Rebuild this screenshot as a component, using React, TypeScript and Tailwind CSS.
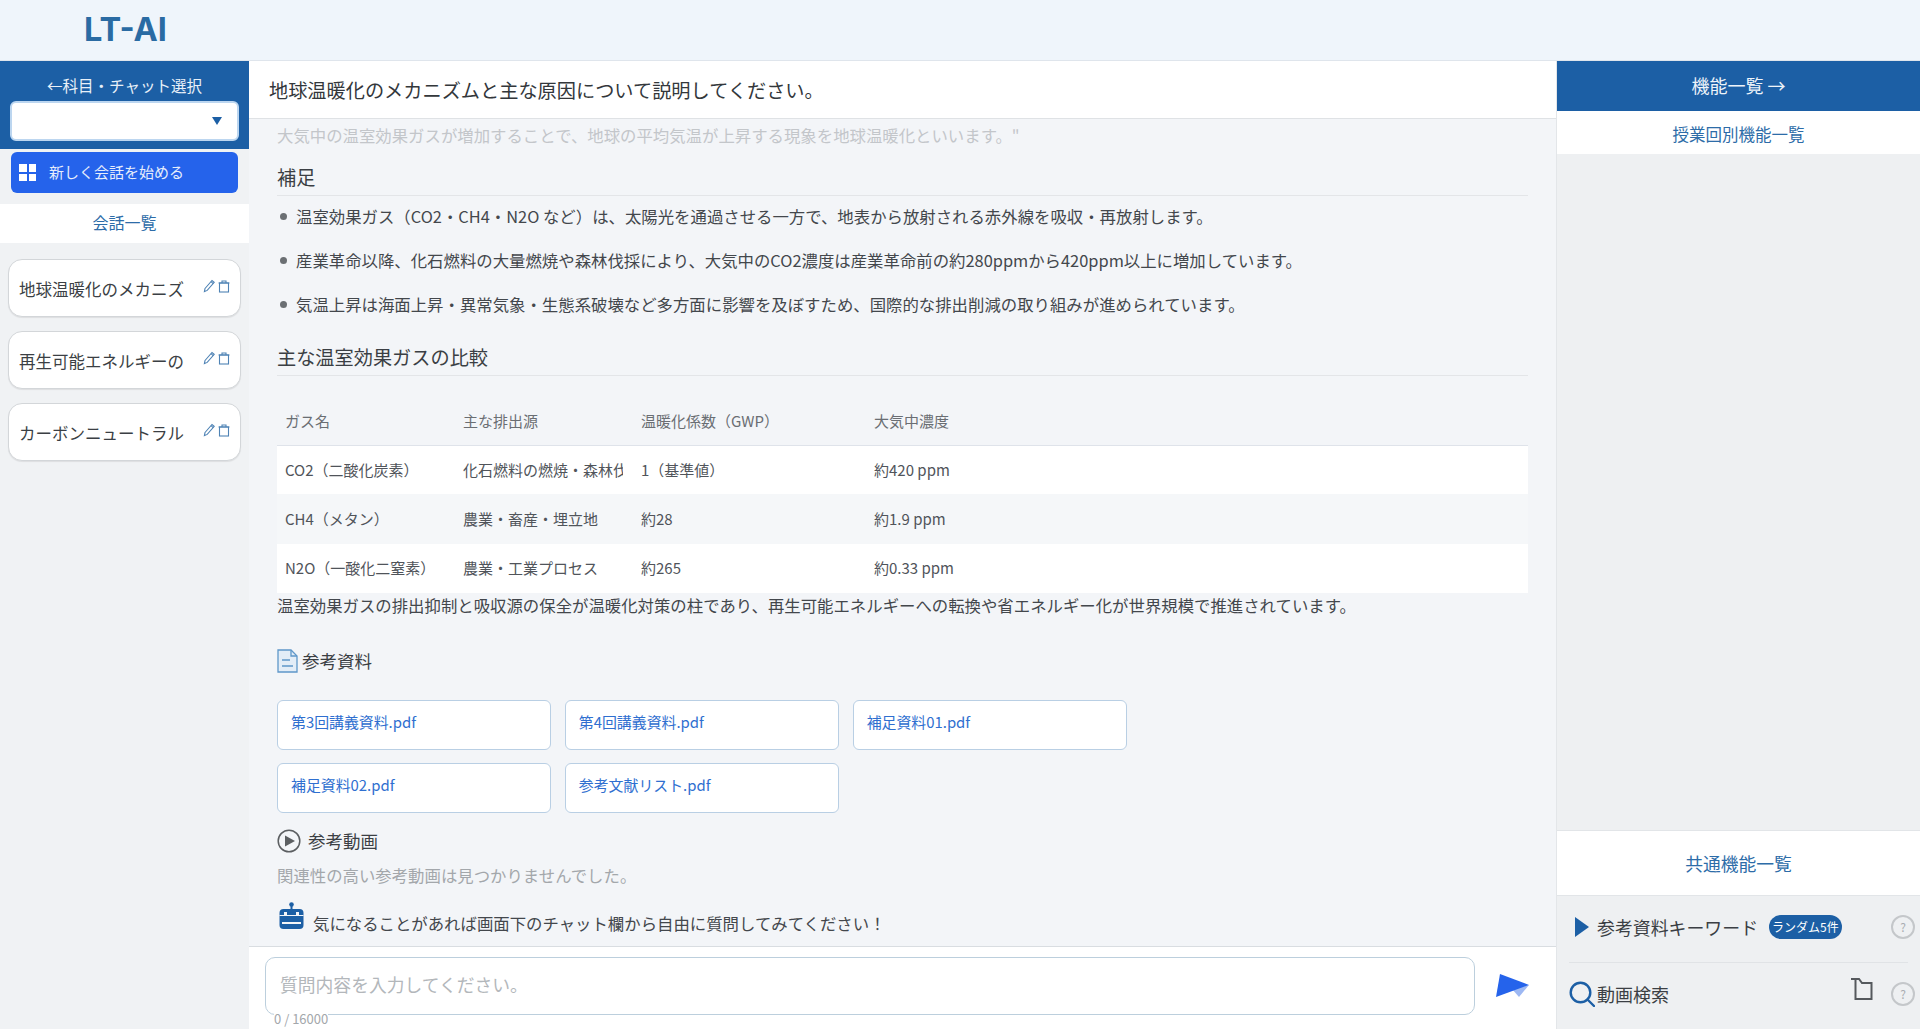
import React from "react";

const chats = ["地球温暖化のメカニズ", "再生可能エネルギーの", "カーボンニュートラル"];

const bullets = [
  "温室効果ガス（CO2・CH4・N2O など）は、太陽光を通過させる一方で、地表から放射される赤外線を吸収・再放射します。",
  "産業革命以降、化石燃料の大量燃焼や森林伐採により、大気中のCO2濃度は産業革命前の約280ppmから420ppm以上に増加しています。",
  "気温上昇は海面上昇・異常気象・生態系破壊など多方面に影響を及ぼすため、国際的な排出削減の取り組みが進められています。",
];

const rows = [
  ["CO2（二酸化炭素）", "化石燃料の燃焼・森林伐採", "1（基準値）", "約420 ppm"],
  ["CH4（メタン）", "農業・畜産・埋立地", "約28", "約1.9 ppm"],
  ["N2O（一酸化二窒素）", "農業・工業プロセス", "約265", "約0.33 ppm"],
];

const pdfs = ["第3回講義資料.pdf", "第4回講義資料.pdf", "補足資料01.pdf", "補足資料02.pdf", "参考文献リスト.pdf"];

const HelpIcon = () => (
  <div className="flex h-[24px] w-[24px] shrink-0 items-center justify-center rounded-full border-2 border-[#c4c7ca] text-[12px] text-[#a9adb1]">
    ?
  </div>
);

const PencilTrash = () => (
  <div className="flex shrink-0 items-center gap-[2px] text-[#4f83b5]">
    <svg width="13" height="14" viewBox="0 0 13 14" fill="none" stroke="currentColor" strokeWidth="1.1">
      <path d="M2 9.5 9 1.5l2.2 1.9-7 8L1.4 12.6z" />
      <path d="M8 2.7l2.2 1.9" />
    </svg>
    <svg width="12" height="13" viewBox="0 0 12 13" fill="none" stroke="currentColor" strokeWidth="1.1">
      <rect x="1.5" y="3" width="9" height="9" />
      <path d="M0.5 3h11M4 3V1h4v2" />
    </svg>
  </div>
);

const Sidebar = () => (
  <aside className="flex w-[249px] shrink-0 flex-col bg-[#f0f2f4]">
    <div className="h-[88px] bg-[#1c5fa5] px-[10px] pt-[13px]">
      <div className="text-center text-[15.5px] leading-[22px] text-[#e8f0f8]">←科目・チャット選択</div>
      <div className="mt-[5px] flex h-[40px] items-center justify-end rounded-[6px] border-2 border-[#bcd6f0] bg-white pr-[15px]">
        <div className="h-0 w-0 border-x-[5px] border-t-[8px] border-x-transparent border-t-[#1c5fa5]" />
      </div>
    </div>
    <div className="mx-[11px] mt-[3px] flex h-[41px] items-center rounded-[6px] bg-[#2563eb] pl-[8px] text-[15px] text-[#e6edfb]">
      <div className="grid grid-cols-2 gap-[2px]">
        <div className="h-[7.5px] w-[7.5px] bg-white" />
        <div className="h-[7.5px] w-[7.5px] bg-white" />
        <div className="h-[7.5px] w-[7.5px] bg-white" />
        <div className="h-[7.5px] w-[7.5px] bg-white" />
      </div>
      <span className="ml-[13px]">新しく会話を始める</span>
    </div>
    <div className="mt-[11px] flex h-[39px] items-center justify-center bg-white pb-[3px] text-[16px] text-[#2d6ca8]">会話一覧</div>
    <div className="mt-[16px] flex flex-col gap-[14px] px-[8px]">
      {chats.map((c) => (
        <div
          key={c}
          className="flex h-[58px] items-center justify-between rounded-[14px] border border-[#d3d6d9] bg-white pl-[10px] pr-[10px] shadow-[0_1px_1px_rgba(0,0,0,0.08)]"
        >
          <span className="mt-[3px] whitespace-nowrap text-[16.5px] text-[#3b3f44]">{c}</span>
          <div className="-mt-[4px]">
            <PencilTrash />
          </div>
        </div>
      ))}
    </div>
  </aside>
);

const SectionTitle = ({ children }: { children: React.ReactNode }) => (
  <div className="border-b border-[#e3e5e8] pb-[5px] pt-[1px] text-[19.2px] leading-[25px] text-[#3b3f44]">{children}</div>
);

const Main = () => (
  <main className="flex min-w-0 flex-1 flex-col bg-[#f3f5f8]">
    <div className="flex h-[58px] shrink-0 items-center border-b border-[#dfe2e5] bg-white pl-[20px] pt-[2px] text-[19.2px] text-[#33373b]">
      地球温暖化のメカニズムと主な原因について説明してください。
    </div>
    <div className="min-h-0 flex-1 overflow-hidden pl-[28px] pr-[28px] pt-[4px]">
      <p className="text-[16.4px] leading-[24px] text-[#c3c6ca]">大気中の温室効果ガスが増加することで、地球の平均気温が上昇する現象を地球温暖化といいます。"</p>
      <div className="mt-[17px]">
        <SectionTitle>補足</SectionTitle>
      </div>
      <ul className="mt-[8px] flex flex-col gap-[20px]">
        {bullets.map((b) => (
          <li key={b} className="flex items-center text-[16.4px] leading-[24px] text-[#43474c]">
            <span className="ml-[3px] mr-[9px] h-[7px] w-[7px] rounded-full bg-[#6b6f73]" />
            {b}
          </li>
        ))}
      </ul>
      <div className="mt-[28px]">
        <SectionTitle>主な温室効果ガスの比較</SectionTitle>
      </div>
      <table className="mt-[21px] w-full table-fixed text-[15px] text-[#50545a]">
        <thead>
          <tr className="h-[48px] border-b border-[#dfe3ea] text-left text-[#6a6e73]">
            <th className="w-[178px] pl-[8px] font-normal">ガス名</th>
            <th className="w-[178px] pl-[8px] font-normal">主な排出源</th>
            <th className="w-[233px] pl-[8px] font-normal">温暖化係数（GWP）</th>
            <th className="pl-[8px] font-normal">大気中濃度</th>
          </tr>
        </thead>
        <tbody>
          {rows.map((r, i) => (
            <tr key={r[0]} className={i === 1 ? "h-[50px] bg-[#f5f7f9]" : "h-[49px] bg-white"}>
              {r.map((c) => (
                <td key={c} className="whitespace-nowrap pl-[8px] pr-[10px]">
                  <div className="overflow-hidden">{c}</div>
                </td>
              ))}
            </tr>
          ))}
        </tbody>
      </table>
      <p className="text-[16.4px] leading-[24px] text-[#43474c]">
        温室効果ガスの排出抑制と吸収源の保全が温暖化対策の柱であり、再生可能エネルギーへの転換や省エネルギー化が世界規模で推進されています。
      </p>
      <div className="mt-[31px] flex items-center gap-[4px]">
        <svg width="21" height="24" viewBox="0 0 21 24" fill="#e3edf7" stroke="#5f97c9" strokeWidth="1.3">
          <path d="M1 1h13l6 6v16H1z" />
          <path d="M14 1v6h6" fill="none" />
          <path d="M5 11h8M5 17h11" fill="none" />
        </svg>
        <span className="text-[17.5px] text-[#3b3f44]">参考資料</span>
      </div>
      <div className="mt-[26px] grid w-[850px] grid-cols-3 gap-x-[13.5px] gap-y-[13px]">
        {pdfs.map((p) => (
          <div
            key={p}
            className="h-[50px] rounded-[6px] border border-[#b9cfe4] bg-white pl-[13px] pt-[9px] text-[14.9px] leading-[24px] text-[#2f6fd0]"
          >
            {p}
          </div>
        ))}
      </div>
      <div className="mt-[15px] flex items-center gap-[7px]">
        <svg width="24" height="24" viewBox="0 0 24 24" fill="none">
          <circle cx="12" cy="12" r="10.8" stroke="#5c5f62" strokeWidth="1.5" />
          <path d="M8 6.5 18 12 8 17.5z" fill="#5c5f62" />
        </svg>
        <span className="text-[17.5px] text-[#3b3f44]">参考動画</span>
      </div>
      <p className="mt-[8px] text-[16.4px] leading-[24px] text-[#a3a7ab]">関連性の高い参考動画は見つかりませんでした。</p>
      <div className="mt-[15px] flex items-end gap-[9px] pl-[2px]">
        <svg width="25" height="28" viewBox="0 0 25 28" fill="#1c5fa5">
          <circle cx="12.5" cy="2.5" r="2.3" />
          <rect x="11.5" y="3" width="2" height="5" />
          <rect x="0.5" y="7" width="24" height="20" rx="4" />
          <rect x="0.5" y="13" width="24" height="1" fill="#f3f5f8" />
          <rect x="5" y="10" width="3" height="3" fill="#f3f5f8" />
          <rect x="17" y="10" width="3" height="3" fill="#f3f5f8" />
          <rect x="3" y="20" width="19" height="2" fill="#f3f5f8" />
        </svg>
        <span className="-mb-[4px] text-[16.4px] leading-[22px] text-[#43474c]">気になることがあれば画面下のチャット欄から自由に質問してみてください！</span>
      </div>
    </div>
    <div className="relative h-[83px] shrink-0 border-t border-[#d9dde1] bg-white pl-[16px] pr-[26px] pt-[10px]">
      <div className="flex items-start gap-[21px]">
        <div className="flex h-[58px] flex-1 items-center rounded-[10px] border border-[#bccfdd] bg-white pb-[4px] pl-[14px] text-[17.8px] text-[#b3b7bb]">
          質問内容を入力してください。
        </div>
        <svg className="mt-[17px] shrink-0" width="34" height="24" viewBox="0 0 34 24">
          <path d="M16 15 33 11 23 23z" fill="#9db8f3" />
          <path d="M4 0 33 11 0 23z" fill="#2563eb" />
        </svg>
      </div>
      <span className="absolute left-[25px] top-[63px] bg-white text-[13px] leading-[18px] text-[#a3a7ab]">0 / 16000</span>
    </div>
  </main>
);

const RightPanel = () => (
  <aside className="flex w-[364px] shrink-0 flex-col border-l border-[#e3e6e9] bg-[#eef0f2]">
    <div className="flex h-[50px] shrink-0 items-center justify-center bg-[#1c5fa5] pb-[2px] text-[18px] text-[#eef4fa]">機能一覧 →</div>
    <div className="flex h-[43px] shrink-0 items-center justify-center bg-white pt-[4px] text-[16.5px] text-[#2d6ca8]">授業回別機能一覧</div>
    <div className="flex-1" />
    <div className="flex h-[66px] shrink-0 items-center justify-center border-y border-[#e2e5e8] bg-white text-[17.8px] text-[#2d6ca8]">共通機能一覧</div>
    <div className="flex h-[66px] shrink-0 items-center pb-[4px] pl-[18px] pr-[5px]">
      <div className="h-0 w-0 border-y-[10px] border-l-[14px] border-y-transparent border-l-[#1c5fa5]" />
      <span className="ml-[8px] text-[17.9px] text-[#3b3f44]">参考資料キーワード</span>
      <span className="ml-[11px] flex h-[24px] items-center rounded-full bg-[#1c5fa5] px-[3px] text-[12px] text-white">ランダム5件</span>
      <div className="ml-auto">
        <HelpIcon />
      </div>
    </div>
    <div className="mx-[12px] border-t border-[#e0e3e6]" />
    <div className="flex h-[66px] shrink-0 items-center pb-[4px] pl-[12px] pr-[5px]">
      <svg width="26" height="26" viewBox="0 0 26 26" fill="none" stroke="#1c5fa5" strokeWidth="2.4">
        <circle cx="11.5" cy="11.5" r="9.8" />
        <path d="M18.5 18.5 25 25" strokeLinecap="round" />
      </svg>
      <span className="ml-[2px] text-[18px] text-[#3b3f44]">動画検索</span>
      <svg className="-mt-[8px] ml-auto" width="22" height="24" viewBox="0 0 22 24" fill="none" stroke="#55595d" strokeWidth="2">
        <path d="M0 1h8l3 4h9.5v16H4.5V1" />
      </svg>
      <div className="ml-[18px]">
        <HelpIcon />
      </div>
    </div>
  </aside>
);

export default function App() {
  return (
    <div className="flex h-screen flex-col overflow-hidden bg-white font-['Noto_Sans_CJK_JP','Noto_Sans',sans-serif]">
      <header className="flex h-[61px] shrink-0 items-center border-b border-[#dfe5ec] bg-[#eff5fb] pl-[84px]">
        <span className="font-['Inter',sans-serif] text-[32.5px] font-bold text-[#2a6ba3]">LT-AI</span>
      </header>
      <div className="flex min-h-0 flex-1">
        <Sidebar />
        <Main />
        <RightPanel />
      </div>
    </div>
  );
}
